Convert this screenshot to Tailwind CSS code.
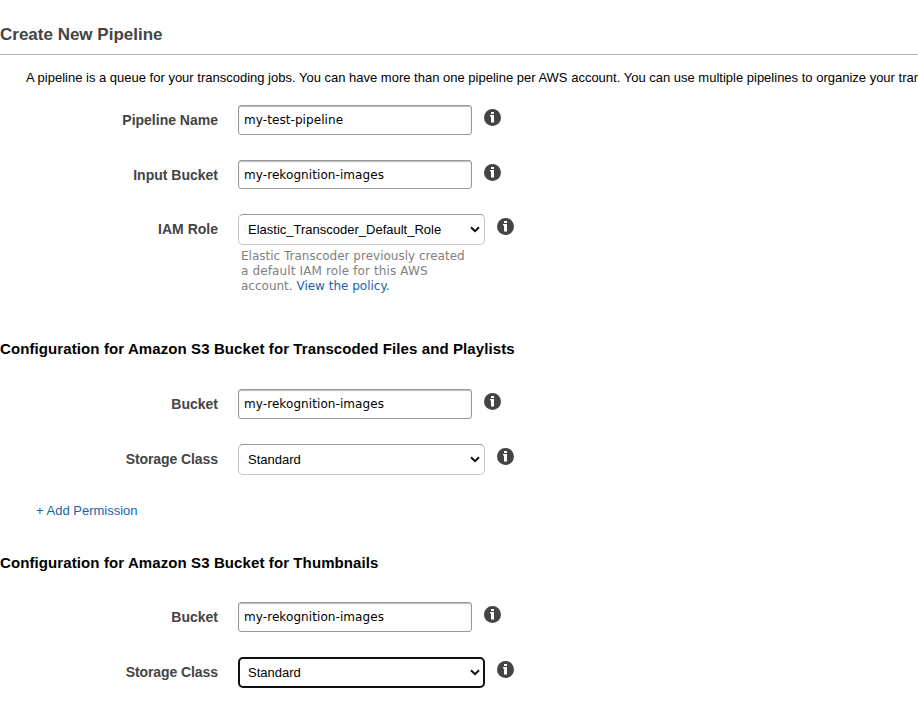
<!DOCTYPE html>
<html lang="en">
<head>
<meta charset="utf-8">
<title>Create New Pipeline</title>
<script src="https://cdn.jsdelivr.net/npm/@tailwindcss/browser@4"></script>
</head>
<body class="bg-white w-[918px] h-[706px] overflow-hidden text-[13px] text-black font-['Liberation_Sans',Arial,sans-serif]">
<svg class="hidden">
  <symbol id="info" viewBox="0 0 17 17"><circle cx="8.5" cy="8.5" r="8.5" fill="#444"/><path d="M7 3h3v2H7zM6 6h4v7.5H7V7.5H6z" fill="#fff"/></symbol>
  <symbol id="chevron" viewBox="0 0 10 7"><path d="M1 1.2 5 5.2 9 1.2" fill="none" stroke="#111" stroke-width="2"/></symbol>
</svg>
<header class="h-[55px] pt-[24px] border-b border-[#b2b2b2]">
  <h1 class="text-[17px] leading-[22px] font-bold text-[#444]">Create New Pipeline</h1>
</header>
<p class="mt-[15px] ml-[26px] h-4 leading-4 whitespace-nowrap w-[892px] overflow-hidden">A pipeline is a queue for your transcoding jobs. You can have more than one pipeline per AWS account. You can use multiple pipelines to organize your transcoding jobs.</p>

<section class="mt-[19px] flex flex-col">
  <div class="flex h-[30px]">
    <label class="w-[218px] mr-5 text-right text-[14px] leading-[30px] font-bold text-[#444]">Pipeline Name</label>
    <input class="w-[234px] h-[30px] px-[5px] border border-[#999] rounded-[3px] shadow-[inset_0_1px_1px_#bbb] text-[12px] tracking-[0.08px] font-['DejaVu_Sans',sans-serif]" value="my-test-pipeline">
    <svg class="w-[17px] h-[17px] ml-3 mt-1"><use href="#info"/></svg>
  </div>
  <div class="flex h-[29px] mt-[25px]">
    <label class="w-[218px] mr-5 text-right text-[14px] leading-[30px] font-bold text-[#444]">Input Bucket</label>
    <input class="w-[234px] h-[29px] px-[5px] pt-px border border-[#999] rounded-[3px] shadow-[inset_0_1px_1px_#bbb] text-[12px] tracking-[0.08px] font-['DejaVu_Sans',sans-serif]" value="my-rekognition-images">
    <svg class="w-[17px] h-[17px] ml-3 mt-1"><use href="#info"/></svg>
  </div>
  <div class="flex h-[31px] mt-[25px]">
    <label class="w-[218px] mr-5 text-right text-[14px] leading-[30px] font-bold text-[#444]">IAM Role</label>
    <div class="w-[247px] h-[31px] flex items-center justify-between pl-[9px] pr-1 border border-[#c4c4c4] border-t-[#999] rounded-[5px]"><span>Elastic_Transcoder_Default_Role</span><svg class="w-[10px] h-[7px]"><use href="#chevron"/></svg></div>
    <svg class="w-[17px] h-[17px] ml-3 mt-1"><use href="#info"/></svg>
  </div>
  <p class="ml-[241px] mt-[4px] h-[45px] text-[12px] leading-[15px] whitespace-nowrap text-[#808080] font-['DejaVu_Sans',sans-serif]">Elastic Transcoder previously created<br><span class="tracking-[0.13px]">a default IAM role for this AWS</span><br>account. <a class="text-[#1b5fae]">View the policy.</a></p>
</section>

<h2 class="mt-[45px] h-5 leading-5 text-[15px] tracking-[0.1px] font-bold whitespace-nowrap">Configuration for Amazon S3 Bucket for Transcoded Files and Playlists</h2>
<section class="mt-[30px] flex flex-col">
  <div class="flex h-[30px]">
    <label class="w-[218px] mr-5 text-right text-[14px] leading-[30px] font-bold text-[#444]">Bucket</label>
    <input class="w-[234px] h-[30px] px-[5px] border border-[#999] rounded-[3px] shadow-[inset_0_1px_1px_#bbb] text-[12px] tracking-[0.08px] font-['DejaVu_Sans',sans-serif]" value="my-rekognition-images">
    <svg class="w-[17px] h-[17px] ml-3 mt-1"><use href="#info"/></svg>
  </div>
  <div class="flex h-[31px] mt-[25px]">
    <label class="w-[218px] mr-5 text-right text-[14px] leading-[30px] tracking-[-0.08px] font-bold text-[#444]">Storage Class</label>
    <div class="w-[247px] h-[31px] flex items-center justify-between pl-[9px] pr-1 border border-[#c4c4c4] border-t-[#999] rounded-[5px]"><span>Standard</span><svg class="w-[10px] h-[7px]"><use href="#chevron"/></svg></div>
    <svg class="w-[17px] h-[17px] ml-3 mt-1"><use href="#info"/></svg>
  </div>
</section>
<a class="block mt-[28px] ml-9 h-4 leading-4 text-[#1b5fae]">+ Add Permission</a>

<h2 class="mt-[34px] h-5 leading-5 text-[15px] tracking-[0.1px] font-bold whitespace-nowrap">Configuration for Amazon S3 Bucket for Thumbnails</h2>
<section class="mt-[29px] flex flex-col">
  <div class="flex h-[30px]">
    <label class="w-[218px] mr-5 text-right text-[14px] leading-[30px] font-bold text-[#444]">Bucket</label>
    <input class="w-[234px] h-[30px] px-[5px] border border-[#999] rounded-[3px] shadow-[inset_0_1px_1px_#bbb] text-[12px] tracking-[0.08px] font-['DejaVu_Sans',sans-serif]" value="my-rekognition-images">
    <svg class="w-[17px] h-[17px] ml-3 mt-1"><use href="#info"/></svg>
  </div>
  <div class="flex h-[31px] mt-[25px]">
    <label class="w-[218px] mr-5 text-right text-[14px] leading-[30px] tracking-[-0.08px] font-bold text-[#444]">Storage Class</label>
    <div class="w-[247px] h-[31px] flex items-center justify-between pl-2 pr-[3px] border-2 border-[#101010] rounded-[5px]"><span>Standard</span><svg class="w-[10px] h-[7px]"><use href="#chevron"/></svg></div>
    <svg class="w-[17px] h-[17px] ml-3 mt-1"><use href="#info"/></svg>
  </div>
</section>
</body>
</html>
